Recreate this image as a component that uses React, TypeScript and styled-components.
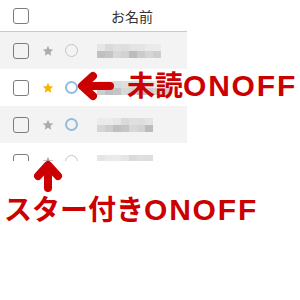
import React from "react";
import styled, { createGlobalStyle } from "styled-components";

const GlobalStyle = createGlobalStyle`
  html, body { margin: 0; padding: 0; background: #ffffff; }
  body { overflow: hidden; font-family: "Noto Sans CJK JP", "Noto Sans", sans-serif; }
`;

const Page = styled.div`
  position: relative;
  width: 300px;
  height: 300px;
  overflow: hidden;
  background: #ffffff;
`;

const Table = styled.div`
  width: 187px;
  height: 161px;
  overflow: hidden;
  display: flex;
  flex-direction: column;
`;

const HeaderRow = styled.div`
  height: 31px;
  flex: none;
  display: flex;
  align-items: center;
  padding-left: 13px;
  border-bottom: 1px solid #c9c9c9;
  box-shadow: 0 1px 1px rgba(0, 0, 0, 0.04);
`;

const HeaderSpacer = styled.div`
  width: 69px;
  flex: none;
`;

const HeaderLabel = styled.div`
  font-family: "Noto Sans CJK JP", sans-serif;
  font-size: 14px;
  color: #333333;
  line-height: 1;
`;

const Row = styled.div<{ $shaded: boolean }>`
  height: 37px;
  flex: none;
  display: flex;
  align-items: center;
  padding-left: 13px;
  background: ${(p) => (p.$shaded ? "#f3f3f3" : "#ffffff")};
`;

const Checkbox = styled.div`
  width: 16px;
  height: 16px;
  box-sizing: border-box;
  border: 1.5px solid #7c7c7c;
  border-radius: 3px;
  flex: none;
  margin-right: 13px;
`;

const StarBox = styled.div`
  width: 12px;
  height: 12px;
  flex: none;
  margin-right: 11px;
  display: flex;
`;

const Dot = styled.div<{ $active: boolean }>`
  width: 13px;
  height: 13px;
  box-sizing: border-box;
  border-radius: 50%;
  border: ${(p) => (p.$active ? "2px solid #93bcdc" : "1.5px solid #c4c4c4")};
  flex: none;
  margin-right: 19px;
`;

const MosaicGrid = styled.div<{ $cols: number }>`
  display: grid;
  grid-template-columns: repeat(${(p) => p.$cols}, 8px);
  grid-auto-rows: 7px;
  filter: blur(0.4px);
`;

const Cell = styled.div`
  width: 8px;
  height: 7px;
`;

const Label = styled.div<{ $left: number; $top: number }>`
  position: absolute;
  left: ${(p) => p.$left}px;
  top: ${(p) => p.$top}px;
  color: #cc0000;
  font-family: "Noto Sans CJK JP", sans-serif;
  font-weight: 700;
  font-size: 28px;
  line-height: 1;
  white-space: nowrap;
  display: flex;
  align-items: baseline;
`;

const Latin = styled.span`
  font-family: "Liberation Sans", Arial, sans-serif;
  font-weight: 700;
  font-size: 30px;
  letter-spacing: 1.8px;
  margin-right: -1.8px;
`;

const ArrowSvg = styled.svg`
  position: absolute;
  left: 0;
  top: 0;
  pointer-events: none;
`;

const Star = ({ color }: { color: string }) => (
  <svg width="12" height="12" viewBox="0 0 24 24">
    <path
      d="M12 1.5l3.1 6.9 7.4.7-5.6 5 1.7 7.4L12 17.6l-6.6 3.9 1.7-7.4-5.6-5 7.4-.7z"
      fill={color}
    />
  </svg>
);

const palettes: string[][] = [
  ["#e6e6e6", "#dedede", "#eaeaea", "#dadada", "#e3e3e3", "#ebebeb", "#dfdfdf", "#e5e5e5"],
  ["#cbcbcb", "#c0c0c0", "#d2d2d2", "#d6d6d6", "#c5c5c5", "#bcbcbc", "#cecece", "#d8d8d8"],
];

const Mosaic = ({ cols, seed }: { cols: number; seed: number }) => {
  const cells: string[] = [];
  for (let r = 0; r < 2; r++) {
    for (let c = 0; c < cols; c++) {
      const pal = palettes[r];
      cells.push(pal[(c * 3 + seed * 5 + r) % pal.length]);
    }
  }
  return (
    <MosaicGrid $cols={cols}>
      {cells.map((bg, i) => (
        <Cell key={i} style={{ background: bg }} />
      ))}
    </MosaicGrid>
  );
};

const rows = [
  { shaded: true, starred: false, unread: false, cols: 8 },
  { shaded: false, starred: true, unread: true, cols: 9 },
  { shaded: true, starred: false, unread: true, cols: 7 },
  { shaded: false, starred: false, unread: false, cols: 7 },
];

export default function App() {
  return (
    <>
      <GlobalStyle />
      <Page>
        <Table>
          <HeaderRow>
            <Checkbox />
            <HeaderSpacer />
            <HeaderLabel>お名前</HeaderLabel>
          </HeaderRow>
          {rows.map((r, i) => (
            <Row key={i} $shaded={r.shaded}>
              <Checkbox />
              <StarBox>
                <Star color={r.starred ? "#f5b400" : "#ababab"} />
              </StarBox>
              <Dot $active={r.unread} />
              <Mosaic cols={r.cols} seed={i} />
            </Row>
          ))}
        </Table>
        <ArrowSvg width="300" height="300" viewBox="0 0 300 300">
          <g stroke="#cc0000" strokeWidth="8" fill="none" strokeLinecap="round" strokeLinejoin="round">
            <line x1="110" y1="86" x2="84" y2="86" />
            <polyline points="93,76 82,86 93,96" />
            <line x1="48" y1="188" x2="48" y2="167" />
            <polyline points="38,176 48,165 58,176" />
          </g>
        </ArrowSvg>
        <Label $left={127} $top={70}>
          未読<Latin>ONOFF</Latin>
        </Label>
        <Label $left={4} $top={194}>
          スター付き<Latin>ONOFF</Latin>
        </Label>
      </Page>
    </>
  );
}
